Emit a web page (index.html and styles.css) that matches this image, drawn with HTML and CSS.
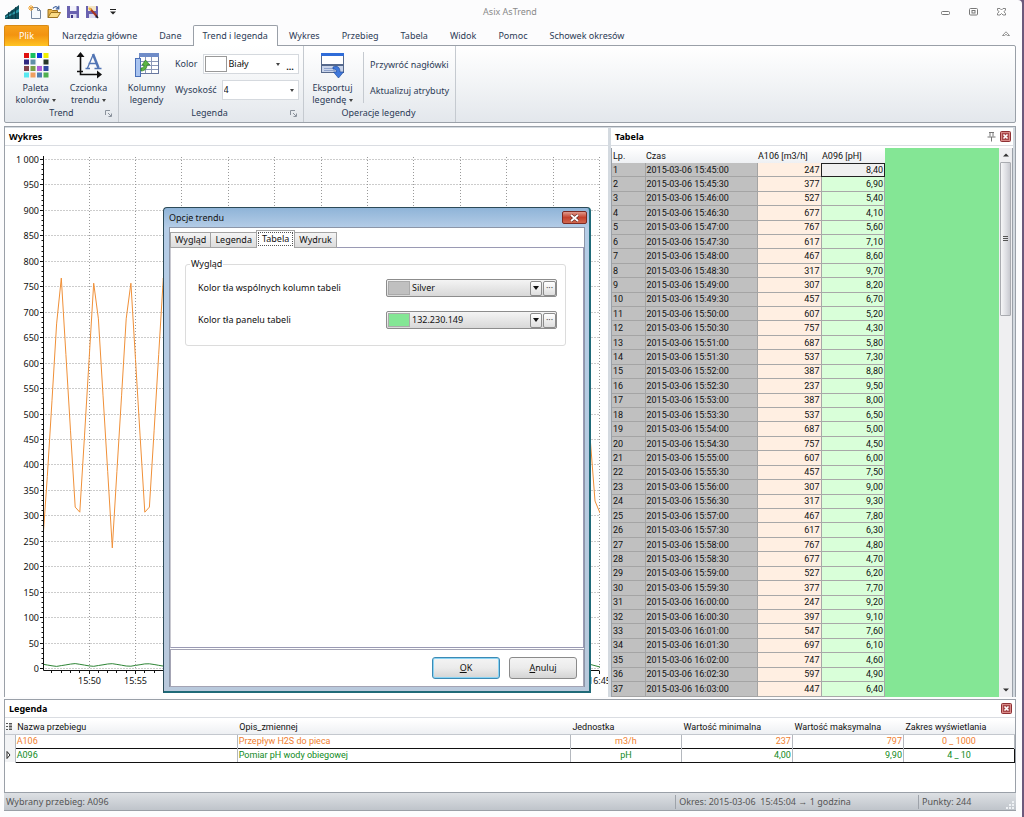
FILE: index.html
```html
<!DOCTYPE html>
<html lang="pl">
<head>
<meta charset="utf-8">
<title>Asix AsTrend</title>
<link rel="stylesheet" href="styles.css">
</head>
<body>
<div class="window">
  <header class="titlebar">
    <div class="quick">
      <svg class="logo" width="14" height="14" viewBox="0 0 14 14"><path d="M0 14V10.500L14 0V14Z" fill="#10505c"/><path d="M0 12 14 4V7L0 13Z" fill="#2f9aa8"/><path d="M3.500 7V14M7 5V14M10.500 2V14" stroke="#0a3540" stroke-width=".8"/></svg>
      <button class="qbtn" aria-label="Nowy"><svg width="14" height="14" viewBox="0 0 14 14"><path d="M3.500 2.500H9.500L12.500 5.500V13.500H3.500Z" fill="#f6f9fd" stroke="#7486a0"/><path d="M9.500 2.500V5.500H12.500" fill="none" stroke="#7486a0"/><path d="M3 0V6M0 3H6M1 1 5 5M5 1 1 5" stroke="#f0a536"/></svg></button>
      <button class="qbtn" aria-label="Otwórz"><svg width="14" height="14" viewBox="0 0 14 14"><path d="M1 12.500V4.500H4.500L5.500 5.500H10.500V12.500Z" fill="#e9b44b" stroke="#9c7321"/><path d="M1 12.500 4 7.500H13.500L10.500 12.500Z" fill="#fbdc86" stroke="#9c7321"/><path d="M6 3.500C7 1.500 9.500 1 11 3M11.800 .8V3.800H8.800" fill="none" stroke="#3c5f9c" stroke-width="1.200"/></svg></button>
      <button class="qbtn" aria-label="Zapisz"><svg width="14" height="14" viewBox="0 0 14 14"><path d="M1 1H12.500L13 2V13H1Z" fill="#6a62b0"/><path d="M4 1H10.500V6H4Z" fill="#f3f3fb"/><path d="M4 9H10.500V13H4Z" fill="#dcdcf0"/><path d="M5 10H7V13H5Z" fill="#3f3788"/></svg></button>
      <button class="qbtn" aria-label="Zapisz jako"><svg width="14" height="14" viewBox="0 0 14 14"><path d="M1 1H12.500L13 2V13H1Z" fill="#6a62b0"/><path d="M3 1H11V6H3Z" fill="#f3e6c8"/><path d="M4 9H10.500V13H4Z" fill="#dcdcf0"/><path d="M5 3.500 11.500 11" stroke="#a8331f" stroke-width="2"/><path d="M4 3 6 5" stroke="#f3bb34" stroke-width="2"/><path d="M11 10.500 13 13" stroke="#222" stroke-width="1.500"/></svg></button>
      <button class="qbtn" aria-label="Dostosuj"><svg width="8" height="8" viewBox="0 0 8 8"><path d="M1 1.500H7" stroke="#222"/><path d="M1 3.500H7L4 6.500Z" fill="#222"/></svg></button>
    </div>
    <h1 class="title">Asix AsTrend</h1>
    <div class="winbtns">
      <button aria-label="Minimalizuj"><svg width="10" height="8" viewBox="0 0 10 8"><rect x=".5" y="3.500" width="8" height="3" rx="1" fill="#fff" stroke="#777"/></svg></button>
      <button aria-label="Przywróć"><svg width="10" height="8" viewBox="0 0 10 8"><rect x=".5" y=".5" width="8" height="6.500" rx="1" fill="#fff" stroke="#777"/><rect x="3" y="2.500" width="3" height="2.500" fill="none" stroke="#777"/></svg></button>
      <button aria-label="Zamknij"><svg width="10" height="8" viewBox="0 0 10 8"><path d="M.5 .5H3L4.500 2 6 .5H8.500V2L7 3.800 8.500 5.500V7H6L4.500 5.500 3 7H.5V5.500L2 3.800 .5 2Z" fill="#fff" stroke="#777" stroke-width=".9"/></svg></button>
    </div>
  </header>

  <nav class="tabs">
    <button class="file">Plik</button>
    <button class="tab">Narzędzia główne</button>
    <button class="tab">Dane</button>
    <button class="tab active">Trend i legenda</button>
    <button class="tab">Wykres</button>
    <button class="tab">Przebieg</button>
    <button class="tab">Tabela</button>
    <button class="tab">Widok</button>
    <button class="tab">Pomoc</button>
    <button class="tab">Schowek okresów</button>
    <button class="collapse" aria-label="Zwiń wstążkę"><svg width="8" height="6" viewBox="0 0 8 6"><path d="M.5 4.500 4 .8 7.500 4.500H5.500L4 3.300 2.500 4.500Z" fill="#fff" stroke="#777" stroke-width=".8"/></svg></button>
  </nav>

  <div class="ribbon">
    <section class="group g-trend">
      <div class="gbody">
        <button class="big"><svg width="28" height="28" viewBox="0 0 28 28"><g id="swatches"></g></svg><span>Paleta<br>kolorów <i class="caret"></i></span></button>
        <button class="big"><svg width="28" height="28" viewBox="0 0 28 28"><path d="M5.500 3V22.500H23M2 19.500H8" fill="none" stroke="#111" stroke-width="1.600"/><path d="M1.500 5 5.500 0 9.500 5ZM22 18.500 27 22.500 22 26.500Z" fill="#111"/><path d="M18 3 12.500 16M13.500 11.500H21M10.500 16.500H15M19.500 16.500H26.500" fill="none" stroke="#5275b4" stroke-width="1.300"/><path d="M18 2 23.500 16" stroke="#5275b4" stroke-width="2.500"/></svg><span>Czcionka<br>trendu <i class="caret"></i></span></button>
      </div>
      <footer><span>Trend</span><svg class="launch" width="7" height="7" viewBox="0 0 7 7"><path d="M.5 5V.5H5M3 3 6 6M6.500 3.500V6.500H3.500" fill="none" stroke="#8a929c"/></svg></footer>
    </section>
    <section class="group g-legend">
      <div class="gbody">
        <button class="big"><svg width="28" height="28" viewBox="0 0 28 28"><rect x="6.500" y="1.500" width="19" height="20" fill="#fff" stroke="#6878a0"/><path d="M6 1H26V5H6Z" fill="#6f8cc8"/><path d="M7 9.500H25M7 13.500H25M7 17.500H25M12.500 5V21M18.500 5V21" stroke="#8c98b8"/><rect x="2.500" y="6.500" width="5" height="18" fill="#a9c4f0" stroke="#4a70b8"/><path d="M8 19C12 19 14 16 14 13H17L12.500 8 9 13H11C11 15 10 16 8 16Z" fill="#5cb545" stroke="#2c7a24" stroke-width=".7"/></svg><span>Kolumny<br>legendy</span></button>
        <div class="fields">
          <div class="frow"><label for="kolor">Kolor</label><div class="combo"><i class="sw white"></i><select id="kolor"><option>Biały</option></select><i class="caret"></i><button class="dots" aria-label="Więcej kolorów">...</button></div></div>
          <div class="frow"><label for="wys">Wysokość</label><div class="combo"><select id="wys"><option>4</option></select><i class="caret"></i></div></div>
        </div>
      </div>
      <footer><span>Legenda</span><svg class="launch" width="7" height="7" viewBox="0 0 7 7"><path d="M.5 5V.5H5M3 3 6 6M6.500 3.500V6.500H3.500" fill="none" stroke="#8a929c"/></svg></footer>
    </section>
    <section class="group g-ops">
      <div class="gbody">
        <button class="big"><svg width="28" height="28" viewBox="0 0 28 28"><rect x="2.500" y="1.500" width="22" height="19" fill="#fff" stroke="#56698c"/><path d="M2 1H25V4H2Z" fill="#2f6cd8"/><path d="M2 12H25V14H2Z" fill="#56698c"/><path d="M3 14H24V20H3Z" fill="#c9d4ea"/><path d="M5 16.500H14M5 18.500H16" stroke="#8fa3cc"/><path d="M14 15C19 13 21 16 21 20H24.500L19.500 26 14.500 20H17.500C17.500 18 16.500 17 14 17Z" fill="#3f78dc" stroke="#234f9e" stroke-width=".7"/></svg><span>Eksportuj<br>legendę <i class="caret"></i></span></button>
        <div class="links"><button>Przywróć nagłówki</button><button>Aktualizuj atrybuty</button></div>
      </div>
      <footer><span>Operacje legendy</span></footer>
    </section>
  </div>

  <main class="work">
    <section class="pane chart">
      <h2 class="phead"><span>Wykres</span></h2>
      <svg id="plot" class="plot" viewBox="0 0 603 548" preserveAspectRatio="xMinYMin meet" role="img" aria-label="Wykres przebiegów"></svg>
    </section>
    <section class="pane data">
      <h2 class="phead"><span>Tabela</span>
        <button class="pin" aria-label="Przypnij"><svg width="9" height="10" viewBox="0 0 9 10"><path d="M2 .5H7M3 1V4.500M6 1V4.500M.5 5H8.500M4.500 5V9.500" fill="none" stroke="#777"/></svg></button>
        <button class="pclose" aria-label="Zamknij"><svg width="11" height="11" viewBox="0 0 11 11"><rect x=".5" y=".5" width="10" height="10" rx="1" fill="#d98a88" stroke="#8e3034"/><rect x="2" y="2" width="7" height="7" fill="#a8484a"/><path d="M3.500 3.500 7.500 7.500M7.500 3.500 3.500 7.500" stroke="#fff" stroke-width="1.600"/></svg></button>
      </h2>
      <div class="gridwrap">
        <table class="readings">
          <thead><tr><th>Lp.</th><th>Czas</th><th>A106 [m3/h]</th><th>A096 [pH]</th></tr></thead>
          <tbody id="rows"></tbody>
        </table>
        <div class="scroll">
          <button aria-label="W górę"><svg width="6" height="4" viewBox="0 0 6 4"><path d="M0 3.500 3 .5 6 3.500Z" fill="#333"/></svg></button>
          <div class="thumb"><i></i><i></i><i></i></div>
          <button aria-label="W dół" class="down"><svg width="6" height="4" viewBox="0 0 6 4"><path d="M0 .5H6L3 3.500Z" fill="#333"/></svg></button>
        </div>
      </div>
    </section>
  </main>

  <section class="legend">
    <h2 class="phead"><span>Legenda</span>
      <button class="pclose" aria-label="Zamknij"><svg width="11" height="11" viewBox="0 0 11 11"><rect x=".5" y=".5" width="10" height="10" rx="1" fill="#d98a88" stroke="#8e3034"/><rect x="2" y="2" width="7" height="7" fill="#a8484a"/><path d="M3.500 3.500 7.500 7.500M7.500 3.500 3.500 7.500" stroke="#fff" stroke-width="1.600"/></svg></button>
    </h2>
    <table class="ltable">
      <colgroup><col class="c0"><col class="c1"><col class="c2"><col class="c3"><col class="c3"><col class="c3"><col class="c3"></colgroup>
      <thead><tr><th><svg width="6" height="8" viewBox="0 0 6 8"><path d="M0 .5H2M0 3.500H2M0 6.500H2M3 .5H6M3 3.500H6M3 6.500H6M3 5H6M3 2H6" stroke="#555"/></svg></th><th>Nazwa przebiegu</th><th>Opis_zmiennej</th><th>Jednostka</th><th>Wartość minimalna</th><th>Wartość maksymalna</th><th>Zakres wyświetlania</th></tr></thead>
      <tbody>
        <tr class="orange"><td class="mark"></td><td>A106</td><td>Przepływ H2S do pieca</td><td class="mid">m3/h</td><td class="num">237</td><td class="num">797</td><td class="mid">0 _ 1000</td></tr>
        <tr class="green"><td class="mark"><svg width="5" height="8" viewBox="0 0 5 8"><path d="M1 .5 4 4 1 7.500Z" fill="#fff" stroke="#222"/></svg></td><td>A096</td><td>Pomiar pH wody obiegowej</td><td class="mid">pH</td><td class="num">4,00</td><td class="num">9,90</td><td class="mid">4 _ 10</td></tr>
      </tbody>
    </table>
  </section>

  <footer class="status">
    <span class="s1">Wybrany przebieg: A096</span>
    <span class="s2">Okres: 2015-03-06&nbsp; 15:45:04 → 1 godzina</span>
    <span class="s3">Punkty: 244</span>
    <svg class="grip" width="10" height="10" viewBox="0 0 10 10"><path d="M7 1H9V3H7ZM4 4H6V6H4ZM7 4H9V6H7ZM1 7H3V9H1ZM4 7H6V9H4ZM7 7H9V9H7Z" fill="#eef1f4"/></svg>
  </footer>

  <div class="dialog" role="dialog" aria-labelledby="dt">
    <header class="dhead"><h2 id="dt">Opcje trendu</h2><button class="dclose" aria-label="Zamknij"><svg width="9" height="8" viewBox="0 0 9 8"><path d="M1 1 8 7M8 1 1 7" stroke="#5c2a26" stroke-width="3"/><path d="M1 1 8 7M8 1 1 7" stroke="#fff" stroke-width="1.800"/></svg></button></header>
    <div class="dbody">
      <div class="dtabs" role="tablist">
        <button role="tab">Wygląd</button><button role="tab">Legenda</button><button role="tab" class="on" aria-selected="true"><span>Tabela</span></button><button role="tab">Wydruk</button>
      </div>
      <div class="dpanel">
        <fieldset>
          <legend>Wygląd</legend>
          <div class="drow"><label for="c1">Kolor tła wspólnych kolumn tabeli</label><div class="dcombo"><i class="sw silver"></i><select id="c1"><option>Silver</option></select><b class="drop"><i class="caret"></i></b><button aria-label="Wybierz kolor">···</button></div></div>
          <div class="drow"><label for="c2">Kolor tła panelu tabeli</label><div class="dcombo"><i class="sw lime"></i><select id="c2"><option>132.230.149</option></select><b class="drop"><i class="caret"></i></b><button aria-label="Wybierz kolor">···</button></div></div>
        </fieldset>
      </div>
      <div class="dfoot"><button class="default"><u>O</u>K</button><button><u>A</u>nuluj</button></div>
    </div>
  </div>
</div>
<script src="script.js"></script>
</body>
</html>
```
FILE: styles.css
```css
:root {
  --ui: "Noto Sans", "Open Sans", sans-serif;
  --grid: Roboto, "Noto Sans", sans-serif;
  --line: #9aa0a8;
  --navy: #2c3b56;
}
* { box-sizing: border-box; }
html, body { height: 100%; }
body { margin: 0; font: 9px/12px var(--ui); color: #111; background: #6c5a7c; overflow: hidden; }
button, select { font: inherit; color: inherit; background: none; border: 0; padding: 0; margin: 0; appearance: none; outline: 0; }
h1, h2 { margin: 0; font-size: 9px; }
svg { display: block; }

.window { position: relative; display: flex; flex-direction: column; height: 100%; min-height: 600px; margin-right: 2px; padding: 0 6px 6px 4px; background: #fcfcfd; border-radius: 0 4px 0 0; }

.titlebar { display: grid; grid-template-columns: 1fr auto 1fr; align-items: center; height: 24px; flex: none; }
.quick { display: flex; align-items: center; gap: 5px; padding-left: 1px; }
.logo { margin-right: 4px; }
.qbtn:last-child { margin-left: 5px; }
.title { font-weight: 400; color: #8a8a8a; }
.winbtns { display: flex; justify-content: flex-end; gap: 18px; padding-right: 9px; }

.tabs { display: flex; align-items: flex-end; height: 22px; flex: none; margin-bottom: -1px; color: var(--navy); position: relative; }
.file { width: 45px; height: 21px; color: #fff; background: linear-gradient(#f6a11c, #f39410 45%, #ffc423); border: 1px solid #d88a14; border-bottom: 0; border-radius: 2px 2px 0 0; margin-right: 2px; }
.tab { height: 21px; padding: 0 11px; }
.tab.active { padding: 0 9px; background: #fff; border: 1px solid var(--line); border-bottom: 0; border-radius: 2px 2px 0 0; }
.collapse { margin: 0 6px 9px auto; }

.ribbon { display: flex; flex: none; height: 78px; border: 1px solid var(--line); border-radius: 0 2px 2px 2px; background: linear-gradient(#fff, #f2f4f6 50%, #e3e7ec); color: var(--navy); }
.group { display: flex; flex-direction: column; border-right: 1px solid #c5cad0; padding: 6px 4px 0; }
.g-trend { width: 114px; }
.g-legend { width: 185px; padding-left: 1px; }
.g-ops { width: 152px; padding-left: 2px; }
.gbody { display: flex; flex: 1; }
.big { display: flex; flex-direction: column; align-items: center; width: 53px; flex: none; }
.big svg { height: 28px; margin-bottom: 2px; }
.big span { white-space: nowrap; }
.caret { display: inline-block; border: 2px solid transparent; border-top: 3px solid #444; border-bottom: 0; vertical-align: middle; flex: none; }
.group footer { position: relative; text-align: center; height: 15px; }
.launch { position: absolute; right: 2px; top: 3px; }
.fields { display: flex; flex-direction: column; gap: 6px; flex: 1; padding: 2px 0 0 2px; }
.frow { display: flex; align-items: center; gap: 5px; }
.combo { display: flex; align-items: center; flex: 1; min-width: 0; height: 20px; background: #fff; border: 1px solid #d5d9de; padding: 0 4px 0 1px; color: #111; }
.combo select { flex: 1; min-width: 0; }
.combo .sw { width: 22px; height: 16px; border: 1px solid #999; background: #fff; margin-right: 2px; }
.dots { width: 10px; margin: 6px -1px 0 5px; font-weight: 700; }
.links { display: flex; flex-direction: column; gap: 14px; align-items: flex-start; border-left: 1px solid #c5cad0; margin: 0 0 4px 4px; padding: 7px 0 0 6px; white-space: nowrap; }

.work { display: grid; grid-template-columns: 603fr 402fr; gap: 3px; flex: 1; min-height: 0; padding: 1px 2px 0 0; margin-top: 3px; background: #d4dae0; border: 1px solid var(--line); border-width: 1px 1px 0; }
.pane { display: flex; flex-direction: column; background: #fff; min-width: 0; min-height: 0; overflow: hidden; }
.phead { display: flex; align-items: center; gap: 4px; flex: none; height: 18px; padding: 0 3px 0 4px; border-bottom: 1px solid #dadde2; background: #fff; color: #000; }
.phead span { flex: 1; }
.data .phead { margin-bottom: 2px; padding-right: 2px; }
.plot { width: 100%; flex: 1; min-height: 0; }
.plot text { font: 9px var(--ui); fill: #111; }

.gridwrap { display: flex; flex: 1; min-height: 0; background: #84e695; border-left: 1px solid var(--line); border-right: 1px solid var(--line); }
.readings { flex: none; height: 100%; width: 273px; table-layout: fixed; border-collapse: collapse; font: 9px/10px var(--grid); }
.readings th { height: 15px; text-align: left; font-weight: 400; background: linear-gradient(#fff, #eef0f3); padding: 0 1px; white-space: nowrap; }
.readings th:nth-child(1) { width: 33px; }
.readings th:nth-child(2) { width: 112px; }
.readings th:nth-child(3) { width: 64px; }
.readings td { padding: 0 1px; border: 1px solid #a8a8a8; border-top: 0; border-left: 0; white-space: nowrap; }
.readings td:nth-child(-n+2) { background: silver; border-color: #a4a4a4; }
.readings td:nth-child(3) { background: #ffefe2; text-align: right; }
.readings td:nth-child(4) { background: #d9ffd9; text-align: right; }
.readings td.sel { background: #f0f0f0; outline: 1px solid #222; outline-offset: -1px; }
.scroll { display: flex; flex-direction: column; width: 13px; margin-left: auto; background: #efeff1; }
.scroll button { height: 14px; display: grid; place-items: center; }
.scroll .down { margin-top: auto; }
.thumb { display: flex; flex-direction: column; gap: 1px; align-items: center; justify-content: center; height: 28%; margin: 0 1px; border: 1px solid #a9abb0; border-radius: 1px; background: linear-gradient(90deg, #f6f6f7, #dcdde2 60%, #c8c9cf); }
.thumb i { width: 5px; height: 1px; background: #555; }

.legend { flex: none; min-height: 94px; margin-top: 2px; background: #fff; border: 1px solid var(--line); }
.ltable { width: 100%; table-layout: fixed; border-collapse: collapse; font: 9px/10px var(--grid); margin-top: 2px; }
.c0 { width: 10px; }
.c1 { width: 22%; }
.c2 { width: 33%; }
.c3 { width: 11%; }
.ltable th { height: 14px; text-align: left; font-weight: 400; padding: 0 2px; background: linear-gradient(#fff, #eef0f3); border-bottom: 1px solid #c4c8ce; white-space: nowrap; }
.ltable th:first-child { padding: 0 1px; }
.ltable td { height: 14px; padding: 0 1px; border-right: 1px solid #b4b8be; white-space: nowrap; }
.ltable .mark { background: #f2f3f5; }
.orange { color: #f08030; }
.green { color: #108a1c; }
.green td:not(.mark) { border-top: 1px solid #111; border-bottom: 1px solid #111; }
.green td:nth-child(2) { border-left: 1px solid #111; }
.green td:last-child { border-right: 1px solid #111; }
.ltable .mid { text-align: center; }
.ltable .num { text-align: right; }

.status { display: flex; align-items: center; flex: none; height: 18px; background: linear-gradient(#dde0e4, #bfc4ca); border-bottom: 1px solid #9a9fa6; color: #555; position: relative; }
.status span { padding-left: 3px; line-height: 14px; }
.status .s1 { flex: 1; padding-left: 2px; }
.status .s2 { width: 24%; border-left: 1px solid #9ea3aa; }
.status .s3 { width: 98px; border-left: 1px solid #9ea3aa; }
.grip { position: absolute; right: 1px; bottom: 0; }

.dialog { position: absolute; left: 163px; top: 207px; width: 428px; height: 486px; display: flex; flex-direction: column; padding: 0 4px 4px 5px; background: linear-gradient(#8fb4d8, #b5cde7 20px, #b9c9dc); border: 1px solid #2c4a58; border-right: 2px solid #1f6a78; border-bottom: 2px solid #1f6a78; border-radius: 4px 4px 0 0; }
.dhead { display: flex; align-items: center; height: 19px; flex: none; }
.dhead h2 { flex: 1; font-weight: 400; }
.dclose { width: 25px; height: 13px; display: grid; place-items: center; border: 1px solid #7c2a22; border-radius: 2px; background: linear-gradient(#e09a8c, #c4412c 50%, #d0674e); margin-right: -2px; }
.dbody { display: flex; flex-direction: column; flex: 1; background: #fff; border: 1px solid #8c96a8; border-bottom: 0; padding: 2px 0 0; }
.dtabs { display: flex; align-items: flex-end; flex: none; height: 18px; position: relative; margin-bottom: -1px; }
.dtabs button { height: 16px; padding: 0 4px; border: 1px solid #a4a4a4; margin-right: -1px; background: linear-gradient(#f4f4f4, #dcdcdc); }
.dtabs .on { height: 18px; background: #fff; border-bottom: 0; padding: 0 1px; }
.dtabs .on span { display: block; border: 1px dotted #555; padding: 0 3px; margin-bottom: 2px; }
.dpanel { flex: 1; border: 1px solid #9a9ab4; border-left-color: #c8c8d0; padding: 10px 17px 0 14px; }
fieldset { margin: 0; border: 1px solid #dcdcdc; border-radius: 3px; padding: 9px 8px 16px 12px; }
legend { padding: 0 1px; margin-left: -8px; }
.drow { display: flex; align-items: center; justify-content: space-between; }
.drow + .drow { margin-top: 14px; }
.dcombo { display: flex; align-items: center; gap: 1px; width: 171px; height: 18px; border: 1px solid #8c8c8c; border-radius: 2px; padding: 0 0 0 1px; background: linear-gradient(#f4f4f4, #d8d8d8); }
.dcombo .sw { width: 22px; height: 14px; border: 1px solid #aaa; margin-right: 1px; }
.silver { background: silver; }
.lime { background: #84e695; }
.dcombo select { flex: 1; min-width: 0; }
.drop, .dcombo button { display: grid; place-items: center; width: 13px; height: 15px; border: 1px solid #8c8c8c; border-radius: 2px; background: linear-gradient(#fff, #dedede); line-height: 10px; color: #555; }
.drop { width: 12px; }
.drop .caret { border-width: 4px 3px 0; border-top-color: #111; }
.dfoot { display: flex; align-items: center; justify-content: flex-end; gap: 9px; flex: none; height: 38px; padding-right: 6px; border: 1px solid #a4a4b4; margin-top: 1px; }
.dfoot button { width: 68px; height: 22px; border: 1px solid #8a8a8a; border-radius: 3px; background: linear-gradient(#f4f4f4, #ebebeb 50%, #d4d4d4); }
.dfoot .default { border-color: #3c8ab4; box-shadow: inset 0 0 0 1px #8ad4f4; }
```
FILE: script.js
```js
const a106 = [247,377,527,677,767,617,467,317,307,457,607,757,687,537,387,237,387,537,687,757,607,457,307,317,467,617,767,677,527,377,247,397,547,697,747,597,447];
const a096 = [8.4,6.9,5.4,4.1,5.6,7.1,8.6,9.7,8.2,6.7,5.2,4.3,5.8,7.3,8.8,9.5,8,6.5,5,4.5,6,7.5,9,9.3,7.8,6.3,4.8,4.7,6.2,7.7,9.2,9.1,7.6,6.1,4.6,4.9,6.4];
const two = n => String(n).padStart(2, "0");

document.getElementById("rows").innerHTML = a106.map((v, i) => {
  const s = i * 30 + 45 * 60;
  const time = `${15 + Math.floor(s / 3600)}:${two(Math.floor(s / 60) % 60)}:${two(s % 60)}`;
  return `<tr><td>${i + 1}</td><td>2015-03-06 ${time}</td><td>${v}</td><td${i ? "" : ' class="sel"'}>${a096[i].toFixed(2).replace(".", ",")}</td></tr>`;
}).join("");

const colors = ["#e01010", "#18c060", "#1038e0", "#f0f000", "#302880", "#6090a8", "#ffffff", "#283828", "#804048", "#78a048", "#b060d8", "#3048a0", "#58e8f0", "#f0a060", "#5080b0", "#50b050"];
document.getElementById("swatches").innerHTML = colors.map((c, i) =>
  `<rect x="${2 + (i % 4) * 6.5}" y="${1 + Math.floor(i / 4) * 6.5}" width="5" height="5" fill="${c}"/>`).join("");

const left = 38.5, right = 594.5, top0 = 13.5, bottom = 522.5;
const yOf = v => bottom - v * (bottom - top0) / 1000;
const xOf = min => 37.7 + min * 9.28;
let svg = `<clipPath id="area"><rect x="39" y="8" width="556" height="517"/></clipPath>`;
for (let v = 0; v <= 1000; v += 10) {
  const y = Math.round(yOf(v) - .5) + .5, major = v % 50 === 0;
  svg += `<path d="M${major ? 35 : 36.500} ${y}H${left}" stroke="#111"/>`;
  if (major) {
    svg += `<path d="M${left + 2} ${y}H${right}" stroke="#999" stroke-dasharray="1 2"/>`;
    svg += `<text x="34" y="${y + 3}" text-anchor="end">${v === 1000 ? "1 000" : v}</text>`;
  }
}
for (let m = 1; m <= 60; m++) {
  const x = Math.round(xOf(m) - .5) + .5, major = m % 5 === 0;
  svg += `<path d="M${x} 525V${major ? 528 : 527}" stroke="#111"/>`;
  if (major) {
    svg += `<path d="M${x} 11V524" stroke="#999" stroke-dasharray="1 2"/>`;
    const t = 45 + m;
    svg += `<text x="${x}" y="538" text-anchor="middle">${15 + Math.floor(t / 60)}:${two(t % 60)}</text>`;
  }
}
svg += `<path d="M${left} 10V524.500H${right}" fill="none" stroke="#111"/>`;
const line = data => data.map((v, i) => `${xOf(i / 2).toFixed(1)},${yOf(v).toFixed(1)}`).join(" ");
svg += `<g clip-path="url(#area)" fill="none"><polyline points="${line(a106)}" stroke="#f09038"/><polyline points="585,290 590,355 595,367" stroke="#f09038"/>`;
svg += `<polyline points="${line(a096)}" stroke="#2c8434"/><polyline points="580,517 595,521" stroke="#2c8434"/></g>`;
document.getElementById("plot").innerHTML = svg;
```
